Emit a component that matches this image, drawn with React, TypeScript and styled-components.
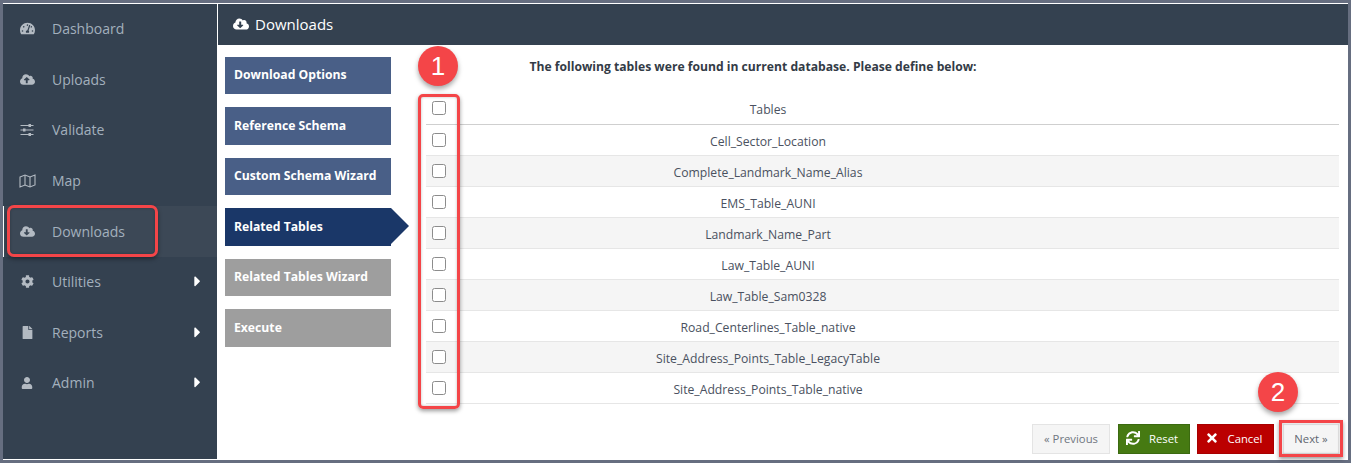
import React from 'react';
import styled, { createGlobalStyle } from 'styled-components';
import {
  FaTachometerAlt,
  FaCloudUploadAlt,
  FaCloudDownloadAlt,
  FaCog,
  FaFile,
  FaUser,
  FaSync,
  FaTimes,
  FaCaretRight,
} from 'react-icons/fa';

const SlidersIcon = () => (
  <svg width="14" height="12" viewBox="0 0 14 12" fill="currentColor">
    <rect x="0.5" y="1" width="13" height="1" />
    <rect x="8.5" y="0" width="2.5" height="3" />
    <rect x="0.5" y="5.5" width="13" height="1" />
    <rect x="3" y="4.5" width="2.5" height="3" />
    <rect x="0.5" y="10" width="13" height="1" />
    <rect x="8.5" y="9" width="2.5" height="3" />
  </svg>
);

const MapIcon = () => (
  <svg width="17" height="14" viewBox="0 0 17 14" fill="none" stroke="currentColor" strokeWidth="1.1">
    <path d="M1 3 L6 1 L11 3 L16 1 V11 L11 13 L6 11 L1 13 Z" />
    <path d="M6 1 V11 M11 3 V13" />
  </svg>
);

const navItems = [
  { label: 'Dashboard', icon: <FaTachometerAlt />, size: 15 },
  { label: 'Uploads', icon: <FaCloudUploadAlt />, size: 15 },
  { label: 'Validate', icon: <SlidersIcon />, size: 13 },
  { label: 'Map', icon: <MapIcon />, size: 15 },
  { label: 'Downloads', icon: <FaCloudDownloadAlt />, size: 15, active: true },
  { label: 'Utilities', icon: <FaCog />, size: 13, more: true },
  { label: 'Reports', icon: <FaFile />, size: 13, more: true },
  { label: 'Admin', icon: <FaUser />, size: 12, more: true },
];

const steps = [
  { label: 'Download Options', state: 'done' },
  { label: 'Reference Schema', state: 'done' },
  { label: 'Custom Schema Wizard', state: 'done' },
  { label: 'Related Tables', state: 'current' },
  { label: 'Related Tables Wizard', state: 'todo' },
  { label: 'Execute', state: 'todo' },
];

const tables = [
  'Cell_Sector_Location',
  'Complete_Landmark_Name_Alias',
  'EMS_Table_AUNI',
  'Landmark_Name_Part',
  'Law_Table_AUNI',
  'Law_Table_Sam0328',
  'Road_Centerlines_Table_native',
  'Site_Address_Points_Table_LegacyTable',
  'Site_Address_Points_Table_native',
];

const App = () => {
  return (
    <>
      <GlobalStyle />
      <Frame>
        <Shell>
          <Sidebar>
            {navItems.map((item) => (
              <NavItem key={item.label} $active={item.active}>
                <NavIcon $size={item.size}>{item.icon}</NavIcon>
                <span>{item.label}</span>
                {item.more && (
                  <NavCaret>
                    <FaCaretRight />
                  </NavCaret>
                )}
              </NavItem>
            ))}
          </Sidebar>
          <Main>
            <Header>
              <FaCloudDownloadAlt />
              <span>Downloads</span>
            </Header>
            <Body>
              <Steps>
                {steps.map((step) => (
                  <Step key={step.label} $state={step.state}>
                    {step.label}
                  </Step>
                ))}
              </Steps>
              <Content>
                <Title>The following tables were found in current database. Please define below:</Title>
                <TableBox>
                  <HeaderRow>
                    <CheckCell>
                      <Check />
                    </CheckCell>
                    <NameCell>Tables</NameCell>
                  </HeaderRow>
                  {tables.map((name) => (
                    <Row key={name}>
                      <CheckCell>
                        <Check />
                      </CheckCell>
                      <NameCell>{name}</NameCell>
                    </Row>
                  ))}
                </TableBox>
                <Actions>
                  <Button $bg="#f5f5f5" $line="#e4e4e4" $fg="#6f7680" $w={78}>
                    « Previous
                  </Button>
                  <Button $bg="#467a12" $line="#3b6a10" $fg="#fff" $w={72} $ml={8} $pr={4}>
                    <FaSync />
                    Reset
                  </Button>
                  <Button $bg="#bb0000" $line="#a80000" $fg="#fff" $w={77} $ml={7} $pr={4}>
                    <FaTimes />
                    Cancel
                  </Button>
                  <Button $bg="#f5f5f5" $line="#e4e4e4" $fg="#5f6670" $w={56} $ml={9}>
                    Next »
                  </Button>
                </Actions>
              </Content>
            </Body>
          </Main>
        </Shell>
        <Highlight $x={7} $y={205} $w={151} $h={52} $r={7} />
        <Highlight $x={418} $y={94} $w={42} $h={315} $r={5} />
        <Highlight $x={1279} $y={420} $w={64} $h={37} $r={0} />
        <Badge $x={418} $y={46}>1</Badge>
        <Badge $x={1258} $y={372}>2</Badge>
      </Frame>
    </>
  );
};

export default App;

const GlobalStyle = createGlobalStyle`
  html, body {
    margin: 0;
    padding: 0;
    background: #666e80;
  }
  * {
    box-sizing: border-box;
  }
`;

const Frame = styled.div`
  position: relative;
  width: 1351px;
  height: 463px;
  padding: 3px;
  background: #666e80;
  font-family: 'Open Sans', sans-serif;
  overflow: hidden;
`;

const Shell = styled.div`
  height: 100%;
  padding-top: 1px;
  display: flex;
  background: #fff;
`;

const Sidebar = styled.div`
  width: 214px;
  margin-right: 1px;
  margin-bottom: 1px;
  flex-shrink: 0;
  background: #344150;
`;

const NavItem = styled.div<{ $active?: boolean }>`
  position: relative;
  height: 50.6px;
  padding: 0 0 1px 15px;
  display: flex;
  align-items: center;
  color: #a3b0bd;
  font-size: 14px;
  background: ${(props) => (props.$active ? '#3c4856' : 'transparent')};
  box-shadow: ${(props) => (props.$active ? 'inset 1px 0 #fff' : 'none')};
`;

const NavIcon = styled.span<{ $size: number }>`
  width: 18px;
  margin-right: 16px;
  display: flex;
  justify-content: center;
  color: #b3bac2;
  font-size: ${(props) => props.$size}px;
`;

const NavCaret = styled.span`
  position: absolute;
  right: 11px;
  top: 50%;
  transform: translateY(-54%);
  display: flex;
  color: #fff;
  font-size: 17px;
`;

const Main = styled.div`
  flex: 1;
  min-width: 0;
  display: flex;
  flex-direction: column;
`;

const Header = styled.div`
  height: 41px;
  padding: 0 0 2px 15px;
  display: flex;
  align-items: center;
  gap: 6px;
  background: #344150;
  color: #fff;
  font-size: 15px;
  svg {
    font-size: 16px;
  }
`;

const Body = styled.div`
  flex: 1;
  display: flex;
  padding: 12px 9px 0 7px;
`;

const Steps = styled.div`
  width: 166px;
  flex-shrink: 0;
  display: flex;
  flex-direction: column;
  gap: 13px;
`;

const stepColors: Record<string, string> = {
  done: '#495f87',
  current: '#1a3768',
  todo: '#9e9e9e',
};

const Step = styled.div<{ $state: string }>`
  position: relative;
  height: 37.49px;
  padding: 0 0 2px 9px;
  display: flex;
  align-items: center;
  background: ${(props) => stepColors[props.$state]};
  color: #fff;
  font-size: 12.2px;
  font-weight: 700;
  &::after {
    content: '';
    display: ${(props) => (props.$state === 'current' ? 'block' : 'none')};
    position: absolute;
    left: 100%;
    top: 0;
    border-style: solid;
    border-width: 18.75px 0 18.75px 18px;
    border-color: transparent transparent transparent #1a3768;
  }
`;

const Content = styled.div`
  flex: 1;
  margin-left: 35px;
  min-width: 0;
  display: flex;
  flex-direction: column;
`;

const Title = styled.div`
  height: 37px;
  padding: 2px 259px 0 0;
  text-align: center;
  color: #333b46;
  font-size: 12.15px;
  font-weight: 700;
  line-height: 16px;
`;

const TableBox = styled.div`
  display: flex;
  flex-direction: column;
`;

const HeaderRow = styled.div`
  height: 31px;
  padding-bottom: 2px;
  display: flex;
  align-items: center;
  border-bottom: 1px solid #cfcfcf;
  color: #4a5160;
  font-size: 12.2px;
`;

const Row = styled.div`
  height: 31px;
  display: flex;
  align-items: center;
  border-bottom: 1px solid #e6e6e6;
  color: #4a5160;
  font-size: 12.2px;
  &:nth-child(odd) {
    background: #f5f5f5;
  }
`;

const CheckCell = styled.div`
  width: 26px;
  padding-left: 6px;
  flex-shrink: 0;
`;

const NameCell = styled.div`
  flex: 1;
  padding: 2px 255px 0 0;
  text-align: center;
`;

const Check = styled.div`
  width: 14px;
  height: 14px;
  background: #fff;
  border: 1.5px solid #8c8c8c;
  border-radius: 2.5px;
`;

const Actions = styled.div`
  margin-top: 20px;
  display: flex;
  justify-content: flex-end;
`;

const Button = styled.div<{ $bg: string; $line: string; $fg: string; $w: number; $ml?: number; $pr?: number }>`
  width: ${(props) => props.$w}px;
  height: 30px;
  padding: 0 ${(props) => props.$pr || 0}px 2px 0;
  margin-left: ${(props) => props.$ml || 0}px;
  display: flex;
  align-items: center;
  justify-content: center;
  gap: 9px;
  background: ${(props) => props.$bg};
  border: 1px solid ${(props) => props.$line};
  color: ${(props) => props.$fg};
  font-size: 11.3px;
  svg {
    font-size: 14px;
  }
`;

const Highlight = styled.div<{ $x: number; $y: number; $w: number; $h: number; $r: number }>`
  position: absolute;
  left: ${(props) => props.$x}px;
  top: ${(props) => props.$y}px;
  width: ${(props) => props.$w}px;
  height: ${(props) => props.$h}px;
  border: 3px solid #f44548;
  border-radius: ${(props) => props.$r}px;
  box-shadow: 0 2px 4px rgba(0, 0, 0, 0.4), inset 0 0 3px rgba(0, 0, 0, 0.25);
`;

const Badge = styled.div<{ $x: number; $y: number }>`
  position: absolute;
  left: ${(props) => props.$x}px;
  top: ${(props) => props.$y}px;
  width: 40px;
  height: 40px;
  display: flex;
  align-items: center;
  justify-content: center;
  border-radius: 50%;
  background: #f44548;
  box-shadow: 0 3px 5px rgba(0, 0, 0, 0.35);
  color: #fff;
  font-family: 'Liberation Sans', sans-serif;
  font-size: 26px;
`;
